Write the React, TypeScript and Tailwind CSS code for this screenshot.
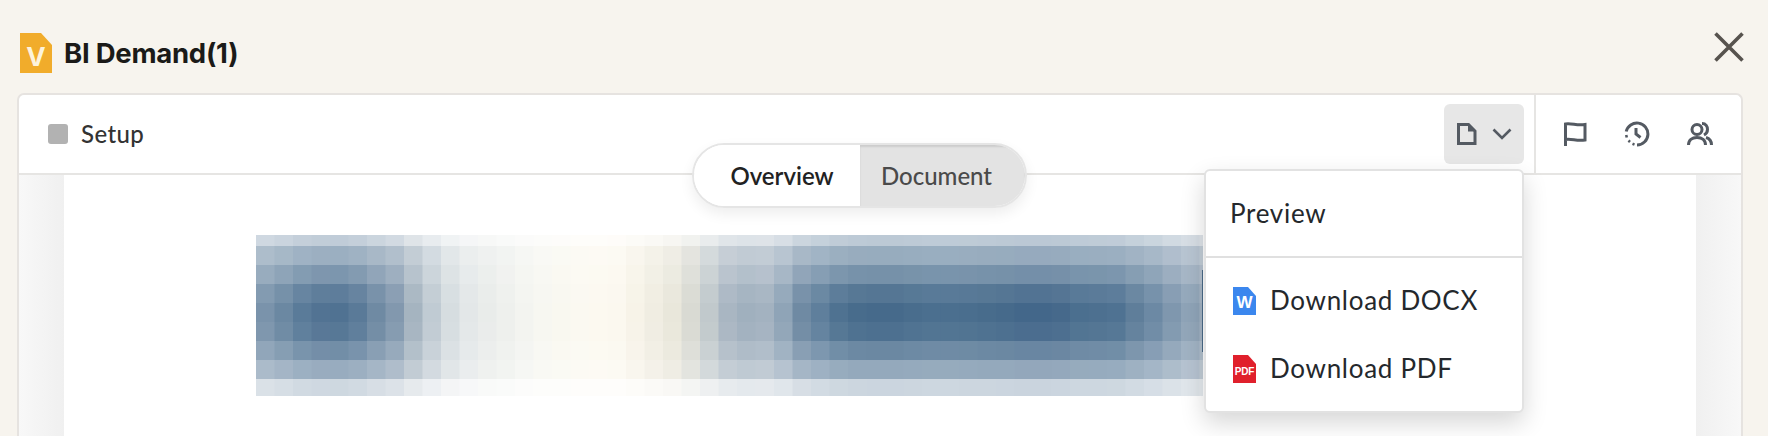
// row 4 of the pixelated banner, the other rows are derived from it
const PROFILE = [
  "#7a93ab", "#6b88a2", "#5a7b99", "#527393", "#507292", "#5a7a98", "#6f8aa3", "#8298ae", "#a5b4c0", "#c0cbd3",
  "#d6dde0", "#e3e7e8", "#e9ecea", "#eef0ed", "#f3f4f0", "#f7f7f1", "#f9f8f0", "#fbf9f1", "#fcf9f0", "#fbf8ef",
  "#f7f3e8", "#f0ede2", "#e9e7db", "#d9dad3", "#c1c9cc", "#a9b6c2", "#a0b0be", "#a3b2c0", "#8fa4b7", "#6f8aa3",
  "#5f7f9c", "#4f7291", "#486c8c", "#466a8b", "#466a8b", "#496d8d", "#4b6f8f", "#4b6f8f", "#4a6e8e", "#486c8c",
  "#466a8b", "#43678a", "#43678a", "#46698b", "#4b6f8f", "#4d7090", "#4f7292", "#5f7e9a", "#6c89a4", "#7f97ae",
  "#8fa4b8", "#a3b3c3",
];
const ROW_WEIGHT = [0.36, 0.56, 0.74, 0.92, 1, 0.96, 0.8, 0.58, 0.28];
const ROW_Y = [0, 11, 30, 49, 68, 87, 106, 125, 144];
const ROW_H = [11, 19, 19, 19, 19, 19, 19, 19, 17];

function bannerColor(hex: string, row: number) {
  const rgb = [1, 3, 5].map((i) => parseInt(hex.slice(i, i + 2), 16));
  const depth = (255 - rgb[0]) / 185;
  const w = ROW_WEIGHT[row];
  const edge = row === 0 || row === 8;
  const f = edge ? w : w + (1 - w) * (1 - depth) * 0.45;
  return `rgb(${rgb.map((c) => Math.round(255 - (255 - c) * f)).join(",")})`;
}

function Banner() {
  return (
    <svg width="947" height="161" viewBox="0 0 947 161" className="block">
      {ROW_Y.map((y, r) =>
        PROFILE.map((c, i) => (
          <rect key={`${r}-${i}`} x={i * 18.5} y={y} width="19" height={ROW_H[r]} fill={bannerColor(c, r)} />
        ))
      )}
      <rect x="946" y="35" width="1" height="82" fill="#4a6a88" />
    </svg>
  );
}

function FileBadge({ color, label, small }: { color: string; label: string; small?: boolean }) {
  return (
    <span className="relative block h-[28px] w-[23px] shrink-0">
      <svg width="23" height="28" viewBox="0 0 23 28" className="block">
        <path d="M0 0H15L23 9V28H0Z" fill={color} />
      </svg>
      <span
        className={
          small
            ? "absolute inset-x-0 top-[11px] text-center font-['Liberation_Sans',sans-serif] text-[10px] leading-[11px] font-bold tracking-[-0.2px] text-white"
            : "absolute inset-x-0 top-[8px] text-center font-['Liberation_Sans',sans-serif] text-[17px] leading-[16px] font-bold tracking-[0] text-white"
        }
      >
        {label}
      </span>
    </span>
  );
}

function FileIcon() {
  return (
    <svg width="20" height="22" viewBox="0 0 20 22" fill="none" stroke="#545a62" strokeWidth="3" className="block">
      <path d="M1.5 1.5H11.5L18 8V20.5H1.5Z" strokeLinejoin="miter" />
      <path d="M11 1L18.5 8.5H11Z" fill="#545a62" stroke="none" />
    </svg>
  );
}

function FlagIcon() {
  return (
    <svg width="24" height="24" viewBox="0 0 24 24" fill="none" stroke="#545a62" strokeWidth="3" className="block">
      <path d="M2.5 24V2C9 1 14 4 22 2.5V18C14 19.5 9 16.5 2.5 17.5" strokeLinejoin="miter" />
    </svg>
  );
}

function ClockIcon() {
  return (
    <svg width="26" height="26" viewBox="0 0 26 26" fill="none" stroke="#545a62" strokeWidth="3" className="block">
      <path d="M2.2 10.5A11 11 0 1 1 13 24" strokeLinecap="butt" />
      <path d="M2.2 14L2.8 16.5M4.5 19.5L6 21M8.5 22.8L10.5 23.6" strokeWidth="2.6" />
      <path d="M12 7V13L16.5 16.5" />
    </svg>
  );
}

function UsersIcon() {
  return (
    <svg width="26" height="24" viewBox="0 0 26 24" fill="none" stroke="#545a62" strokeWidth="3" className="block">
      <circle cx="10" cy="7.5" r="5" />
      <path d="M1.5 23C1.5 18 5 15.5 10 15.5C15 15.5 18.5 18 18.5 23" />
      <path d="M15 1.5C19 1.5 20.5 4.5 20.5 7.5C20.5 10 19 12 17 13" />
      <path d="M19 15.5C22.5 16.5 24.5 19 24.5 23" />
    </svg>
  );
}

export default function App() {
  return (
    <div className="flex h-[436px] w-[1768px] flex-col overflow-hidden bg-[#f7f4ee] font-['Lato',sans-serif]">
      {/* Title bar */}
      <header className="flex h-[93px] shrink-0 items-center justify-between pt-[13px] pr-[24px] pl-[20px]">
        <div className="flex items-center gap-[12px]">
          <span className="relative block h-[40px] w-[32px]">
            <svg width="32" height="40" viewBox="0 0 32 40" className="block">
              <path d="M0 0H21L32 12V40H0Z" fill="#f1ac2b" />
            </svg>
            <span className="absolute inset-x-0 top-[11px] text-center font-['Inter',sans-serif] text-[26px] leading-[26px] font-bold text-[#fdf3dc]">
              V
            </span>
          </span>
          <h1 className="font-['Inter',sans-serif] text-[27.5px] leading-[32px] font-bold tracking-[-0.25px] text-[#1b1a18]">
            BI Demand(1)
          </h1>
        </div>
        <svg width="30" height="30" viewBox="0 0 30 30" stroke="#57534e" strokeWidth="3.6" className="mb-[12px] block">
          <path d="M1.5 1.5L28.5 28.5M28.5 1.5L1.5 28.5" />
        </svg>
      </header>

      {/* Card */}
      <div className="relative mx-[17px] flex min-h-0 w-[1726px] flex-1 flex-col rounded-t-[7px] border-2 border-b-0 border-[#e6e3e0] bg-white">
        <div className="flex h-[80px] shrink-0 items-center border-b-2 border-[#e6e5e3]">
          <div className="flex flex-1 items-center gap-[13px] pl-[29px]">
            <span className="block h-[20px] w-[20px] rounded-[3px] bg-[#b2b2b2]" />
            <span className="text-[24px] leading-[28px] font-medium tracking-[0.4px] text-[#333333]">Setup</span>
          </div>
          <button className="flex h-[60px] w-[80px] items-center justify-center gap-[15px] rounded-[6px] bg-[#e7e7e7]">
            <FileIcon />
            <svg width="20" height="12" viewBox="0 0 20 12" fill="none" stroke="#545a62" strokeWidth="2.6" className="block">
              <path d="M1.5 1.5L10 10L18.5 1.5" />
            </svg>
          </button>
          <div className="ml-[10px] flex h-full w-[207px] items-center gap-[37px] border-l-2 border-[#e6e5e3] pl-[27px]">
            <FlagIcon />
            <ClockIcon />
            <UsersIcon />
          </div>
        </div>

        <div className="flex min-h-0 flex-1">
          <div className="w-[45px] shrink-0 bg-gradient-to-r from-[#f8f8f8] to-[#f0f0f0]" />
          <div className="flex-1 bg-white pt-[60px] pl-[192px]">
            <Banner />
          </div>
          <div className="w-[45px] shrink-0 bg-gradient-to-r from-[#f0f0f0] to-[#f8f8f8]" />
        </div>

        {/* Overview / Document switch */}
        <div className="absolute top-[48px] left-[673px] flex h-[65px] w-[335px] overflow-hidden rounded-full border-2 border-[#e5e5e5] text-[24px] shadow-[0_6px_14px_rgba(0,0,0,0.07)]">
          <div className="flex w-[166px] items-center justify-center bg-white pl-[10px] font-semibold text-[#222222]">
            Overview
          </div>
          <div className="flex flex-1 items-center justify-center bg-[#e3e3e3] pr-[12px] font-medium text-[#4a4a4a] shadow-[inset_0_2px_2px_rgba(0,0,0,0.1)]">
            Document
          </div>
        </div>

        {/* Export menu */}
        <div className="absolute top-[74px] left-[1185px] w-[320px] rounded-[6px] border-2 border-[#e2e2e2] bg-white text-[26px] tracking-[0.7px] text-[#24282c] shadow-[0_10px_24px_rgba(0,0,0,0.16)]">
          <div className="flex h-[87px] items-center border-b-2 border-[#e0e0e0] pl-[24px]">Preview</div>
          <div className="flex h-[153px] flex-col justify-center gap-[40px] pl-[27px]">
            <div className="flex h-[28px] items-center gap-[14px]">
              <FileBadge color="#3b87ee" label="W" />
              <span>Download DOCX</span>
            </div>
            <div className="flex h-[28px] items-center gap-[14px]">
              <FileBadge color="#e0202c" label="PDF" small />
              <span>Download PDF</span>
            </div>
          </div>
        </div>
      </div>
    </div>
  );
}
